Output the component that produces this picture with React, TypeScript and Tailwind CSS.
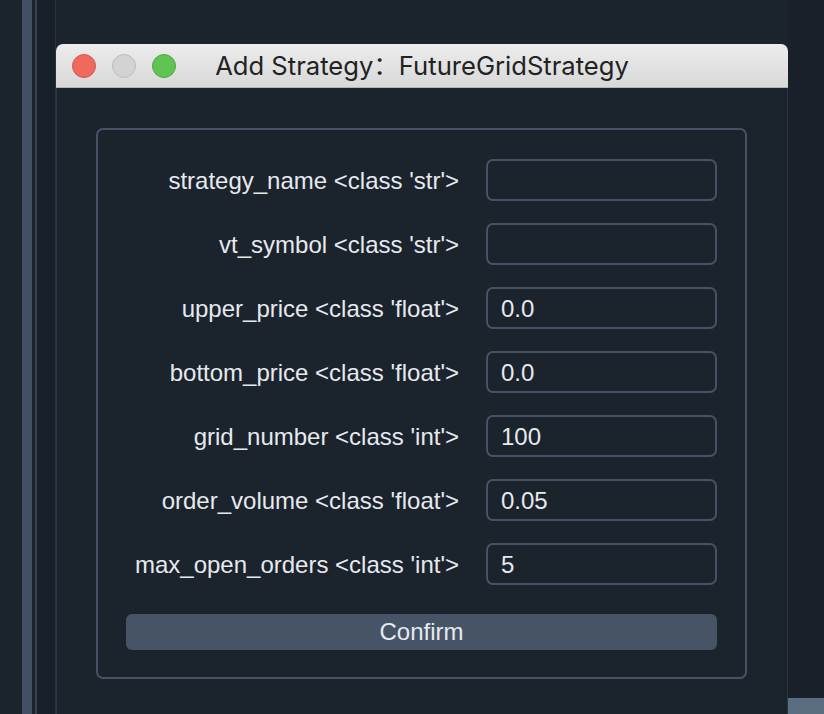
import React from "react";

const rows: [string, string][] = [
  ["strategy_name <class 'str'>", ""],
  ["vt_symbol <class 'str'>", ""],
  ["upper_price <class 'float'>", "0.0"],
  ["bottom_price <class 'float'>", "0.0"],
  ["grid_number <class 'int'>", "100"],
  ["order_volume <class 'float'>", "0.05"],
  ["max_open_orders <class 'int'>", "5"],
];

export default function App() {
  return (
    <div
      className="w-[824px] h-[714px] bg-[#1b232d] overflow-hidden flex"
      style={{ fontFamily: '"Liberation Sans", Arial, sans-serif' }}
    >
      <div className="w-[22px] shrink-0" />
      <div className="w-[10px] shrink-0 bg-[#434f62]" />
      <div className="w-[3px] shrink-0" />
      <div className="w-[2px] shrink-0 bg-[#37424f]" />
      <div className="w-[18px] shrink-0 bg-[#18202a]" />
      <div className="w-[1px] shrink-0 bg-[#2a3440]" />
      {/* window */}
      <div className="w-[732px] shrink-0 mt-[44px] flex flex-col">
        <div className="h-[44px] shrink-0 rounded-t-[7px] bg-gradient-to-b from-[#ededed] to-[#d8d8d8] border-b border-[#b5b5b5] flex items-center relative">
          <div className="absolute left-[16px] top-[10px] flex gap-[16px]">
            <div className="w-[24px] h-[24px] rounded-full bg-[#ee6a5f] border border-[#d8584d]" />
            <div className="w-[24px] h-[24px] rounded-full bg-[#d3d3d3] border border-[#bdbdbd]" />
            <div className="w-[24px] h-[24px] rounded-full bg-[#5fc453] border border-[#4eaa43]" />
          </div>
          <div
            className="flex-1 text-center text-[25.6px] text-[#222222] pt-[1px]"
            style={{ fontFamily: 'Inter, "Noto Sans", "Noto Sans CJK SC", sans-serif' }}
          >
            Add Strategy：FutureGridStrategy
          </div>
        </div>
        <div className="flex-1 bg-[#1b232d] border-x border-[#2c3642] pt-[40px] pl-[39px] pr-[40px]">
          <div className="w-[651px] h-[551px] border-2 border-[#465265] rounded-[7px] flex flex-col pt-[29px] pl-[28px]">
            <div className="flex flex-col gap-[22px]">
              {rows.map(([label, value]) => (
                <div key={label} className="flex items-center h-[42px]">
                  <div className="w-[335px] text-right text-[24px] text-[#e6e9ee] pr-[2px] pt-[1px]">{label}</div>
                  <div className="ml-[25px] w-[231px] h-[42px] border-2 border-[#465265] rounded-[7px] flex items-center pl-[13px] pt-[1px] text-[24px] text-[#e6e9ee]">
                    {value}
                  </div>
                </div>
              ))}
            </div>
            <div className="mt-[29px] w-[591px] h-[36px] rounded-[6px] bg-[#475466] flex items-center justify-center text-[24px] text-[#e6e9ee]">
              Confirm
            </div>
          </div>
        </div>
      </div>
      <div className="flex-1 bg-[#19202a] flex flex-col justify-end">
        <div className="h-[16px] bg-[#5b6d80]" />
      </div>
    </div>
  );
}
